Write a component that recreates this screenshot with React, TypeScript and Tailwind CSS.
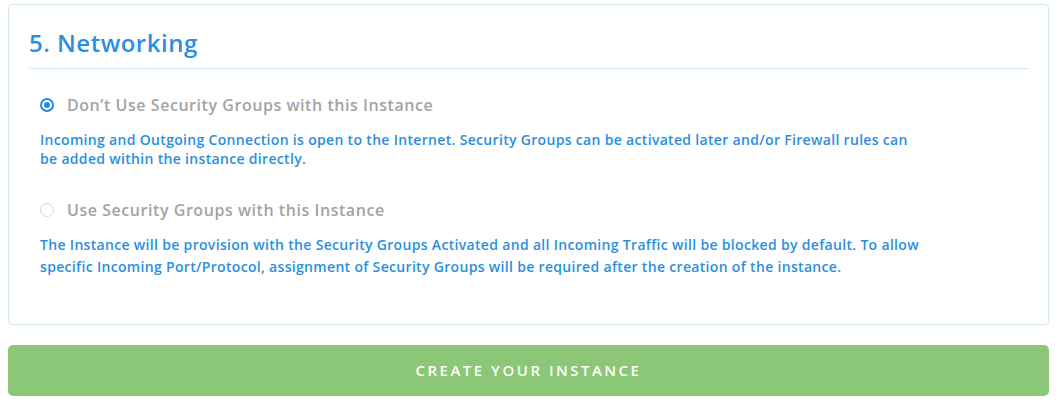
import React from "react";

export default function App() {
  return (
    <div className="w-[1058px] h-[402px] bg-white pt-[4px] pl-[8px] pr-[9px]" style={{ fontFamily: '"Open Sans", "Liberation Sans", sans-serif' }}>
      <div className="border border-[#d3e7f4] rounded-[4px] px-[20px] pt-[23px] h-[321px]">
        <h2 className="text-[24px] leading-[30px] font-semibold tracking-[0.5px] text-[#2a8fe2]">5. Networking</h2>
        <div className="mt-[10px] h-px bg-[#cfe6f5]" />
        <div className="pl-[11px] pt-[24px]">
          <label className="flex items-center gap-[13px] h-[24px]">
            <span className="w-[14px] h-[14px] rounded-full border-2 border-[#1f8ceb] flex items-center justify-center">
              <span className="w-[6px] h-[6px] rounded-full bg-[#1f8ceb]" />
            </span>
            <span className="text-[16px] font-semibold tracking-[0.55px] text-[#a3a3a3]">Don’t Use Security Groups with this Instance</span>
          </label>
          <p className="mt-[13px] text-[14px] leading-[19px] font-semibold tracking-[0.32px] text-[#2a8fe2] max-w-[880px]">
            Incoming and Outgoing Connection is open to the Internet. Security Groups can be activated later and/or Firewall rules can be added within the instance directly.
          </p>
          <label className="flex items-center gap-[13px] h-[24px] mt-[30px]">
            <span className="w-[14px] h-[14px] rounded-full border border-[#d5d5d5]" />
            <span className="text-[16px] font-semibold tracking-[0.55px] text-[#a3a3a3]">Use Security Groups with this Instance</span>
          </label>
          <p className="mt-[12px] text-[14px] leading-[22px] font-semibold tracking-[0.32px] text-[#2a8fe2] max-w-[900px]">
            The Instance will be provision with the Security Groups Activated and all Incoming Traffic will be blocked by default. To allow specific Incoming Port/Protocol, assignment of Security Groups will be required after the creation of the instance.
          </p>
        </div>
      </div>
      <button className="mt-[20px] w-full h-[51px] rounded-[5px] bg-[#8bc776] text-white text-[15px] font-semibold tracking-[2.5px] flex items-center justify-center">
        CREATE YOUR INSTANCE
      </button>
    </div>
  );
}
